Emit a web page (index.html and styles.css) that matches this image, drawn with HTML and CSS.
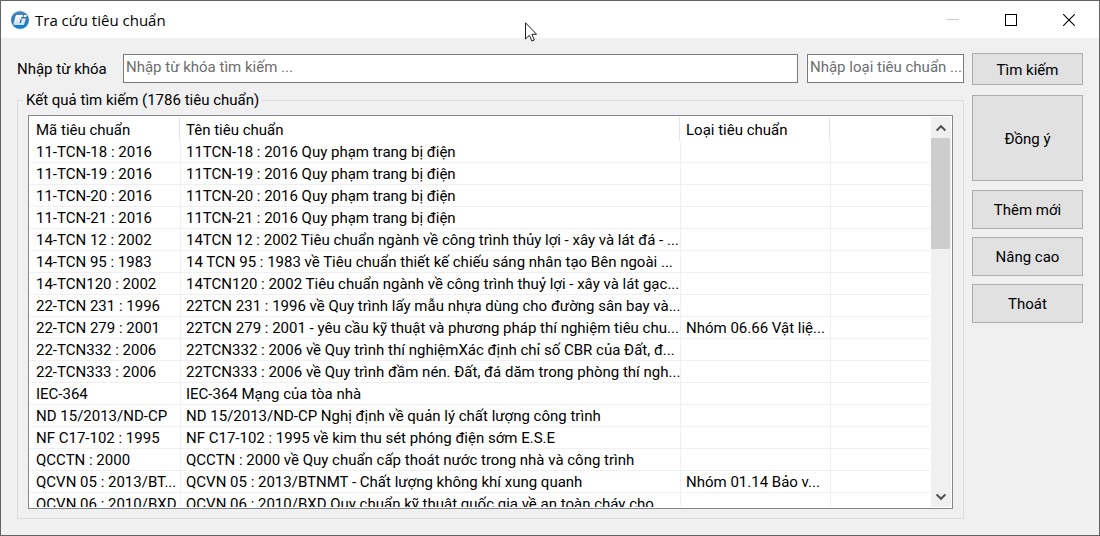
FILE: index.html
```html
<!DOCTYPE html>
<html lang="vi">
<head>
<meta charset="utf-8">
<title>Tra cứu tiêu chuẩn</title>
<link rel="stylesheet" href="styles.css">
</head>
<body>
<div class="window">
  <header class="titlebar">
    <svg class="app-icon" viewBox="0 0 20 20" aria-hidden="true">
      <defs>
        <linearGradient id="disc" x1="0" y1="0" x2="0" y2="1">
          <stop offset="0" stop-color="#4f86bd"/>
          <stop offset="0.5" stop-color="#2f76b4"/>
          <stop offset="1" stop-color="#0a83cf"/>
        </linearGradient>
        <linearGradient id="mark" x1="0" y1="0" x2="0" y2="1">
          <stop offset="0" stop-color="#ffffff"/>
          <stop offset="1" stop-color="#cfdbe8"/>
        </linearGradient>
      </defs>
      <circle cx="10" cy="10" r="9.5" fill="#c5d5e6"/>
      <circle cx="10" cy="10" r="8.8" fill="url(#disc)"/>
      <path d="M7.6 5H16.8L16.2 7H11.2L9.4 13H11L12 9.2H9.8L10.2 8.4H15.8L14 15H4.8C3.8 15 3.2 14.2 3.6 13L5.2 7.2C5.6 5.6 6.4 5 7.6 5Z" fill="url(#mark)"/>
      <path d="M13.6 5L12.8 8.4" stroke="#2f76b4" stroke-width="1"/>
    </svg>
    <h1 class="title">Tra cứu tiêu chuẩn</h1>
    <div class="caption-buttons">
      <button class="caption" type="button" aria-label="Thu nhỏ" disabled>
        <svg viewBox="0 0 12 12" aria-hidden="true"><path d="M0 5.5H12" stroke="#c8c8c8"/></svg>
      </button>
      <button class="caption" type="button" aria-label="Phóng to">
        <svg viewBox="0 0 12 12" aria-hidden="true"><rect x="0.5" y="0.5" width="11" height="11" fill="none" stroke="#000"/></svg>
      </button>
      <button class="caption" type="button" aria-label="Đóng">
        <svg viewBox="0 0 12 12" aria-hidden="true"><path d="M0.2 0.2L11.8 11.8M11.8 0.2L0.2 11.8" stroke="#000" stroke-width="1.1"/></svg>
      </button>
    </div>
  </header>

  <main class="client">
    <div class="main-column">
      <div class="search-row">
        <label class="search-label" for="keyword">Nhập từ khóa</label>
        <input class="field keyword" id="keyword" type="text" placeholder="Nhập từ khóa tìm kiếm ...">
        <input class="field kind" type="text" aria-label="Loại tiêu chuẩn" placeholder="Nhập loại tiêu chuẩn ...">
      </div>
      <fieldset class="results">
        <legend>Kết quả tìm kiếm (1786 tiêu chuẩn)</legend>
        <div class="list">
          <div class="viewport">
            <table class="grid">
              <colgroup><col class="col-code"><col class="col-name"><col class="col-kind"><col></colgroup>
              <thead>
                <tr><th>Mã tiêu chuẩn</th><th>Tên tiêu chuẩn</th><th>Loại tiêu chuẩn</th><th></th></tr>
              </thead>
              <tbody>
                <tr><td>11-TCN-18 : 2016</td><td>11TCN-18 : 2016 Quy phạm trang bị điện</td><td></td><td></td></tr>
                <tr><td>11-TCN-19 : 2016</td><td>11TCN-19 : 2016 Quy phạm trang bị điện</td><td></td><td></td></tr>
                <tr><td>11-TCN-20 : 2016</td><td>11TCN-20 : 2016 Quy phạm trang bị điện</td><td></td><td></td></tr>
                <tr><td>11-TCN-21 : 2016</td><td>11TCN-21 : 2016 Quy phạm trang bị điện</td><td></td><td></td></tr>
                <tr><td>14-TCN 12 : 2002</td><td>14TCN 12 : 2002 Tiêu chuẩn ngành về công trình thủy lợi - xây và lát đá - ...</td><td></td><td></td></tr>
                <tr><td>14-TCN 95 : 1983</td><td>14 TCN 95 : 1983 về Tiêu chuẩn thiết kế chiếu sáng nhân tạo Bên ngoài ...</td><td></td><td></td></tr>
                <tr><td>14-TCN120 : 2002</td><td>14TCN120 : 2002 Tiêu chuẩn ngành về công trình thuỷ lợi - xây và lát gạc...</td><td></td><td></td></tr>
                <tr><td>22-TCN 231 : 1996</td><td>22TCN 231 : 1996 về Quy trình lấy mẫu nhựa dùng cho đường sân bay và...</td><td></td><td></td></tr>
                <tr><td>22-TCN 279 : 2001</td><td>22TCN 279 : 2001 - yêu cầu kỹ thuật và phương pháp thí nghiệm tiêu chu...</td><td>Nhóm 06.66 Vật liệ...</td><td></td></tr>
                <tr><td>22-TCN332 : 2006</td><td>22TCN332 : 2006 về Quy trình thí nghiệmXác định chỉ số CBR của Đất, đ...</td><td></td><td></td></tr>
                <tr><td>22-TCN333 : 2006</td><td>22TCN333 : 2006 về Quy trình đầm nén. Đất, đá dăm trong phòng thí ngh...</td><td></td><td></td></tr>
                <tr><td>IEC-364</td><td>IEC-364 Mạng của tòa nhà</td><td></td><td></td></tr>
                <tr><td>ND 15/2013/ND-CP</td><td>ND 15/2013/ND-CP Nghị định về quản lý chất lượng công trình</td><td></td><td></td></tr>
                <tr><td>NF C17-102 : 1995</td><td>NF C17-102 : 1995 về kim thu sét phóng điện sớm E.S.E</td><td></td><td></td></tr>
                <tr><td>QCCTN : 2000</td><td>QCCTN : 2000 về Quy chuẩn cấp thoát nước trong nhà và công trình</td><td></td><td></td></tr>
                <tr><td>QCVN 05 : 2013/BT...</td><td>QCVN 05 : 2013/BTNMT - Chất lượng không khí xung quanh</td><td>Nhóm 01.14 Bảo v...</td><td></td></tr>
                <tr><td>QCVN 06 : 2010/BXD</td><td>QCVN 06 : 2010/BXD Quy chuẩn kỹ thuật quốc gia về an toàn cháy cho</td><td></td><td></td></tr>
              </tbody>
            </table>
          </div>
          <div class="scrollbar">
            <button class="arrow" type="button" aria-label="Cuộn lên">
              <svg viewBox="0 0 10 8" aria-hidden="true"><path d="M0.6 6.6L5 2.2L9.4 6.6" fill="none" stroke="#505050" stroke-width="2"/></svg>
            </button>
            <div class="track"><div class="thumb"></div></div>
            <button class="arrow" type="button" aria-label="Cuộn xuống">
              <svg viewBox="0 0 10 8" aria-hidden="true"><path d="M0.6 1.4L5 5.8L9.4 1.4" fill="none" stroke="#505050" stroke-width="2"/></svg>
            </button>
          </div>
        </div>
      </fieldset>
    </div>

    <div class="actions">
      <button class="action search" type="button">Tìm kiếm</button>
      <button class="action accept" type="button">Đồng ý</button>
      <button class="action" type="button">Thêm mới</button>
      <button class="action" type="button">Nâng cao</button>
      <button class="action" type="button">Thoát</button>
    </div>
  </main>

  <svg class="pointer" viewBox="0 0 12 20" aria-hidden="true">
    <path d="M0.5 0.8V17L4.3 13.4L6.9 19L9.3 18L6.9 12.3H11.6Z" fill="#fff" stroke="#1c1c28"/>
  </svg>
</div>
</body>
</html>
```
FILE: styles.css
```css
* {
  box-sizing: border-box;
}

body {
  margin: 0;
  font-family: Roboto, "Liberation Sans", Arial, sans-serif;
  font-size: 15px;
  line-height: 20px;
  color: #000;
}

button,
input {
  font: inherit;
  color: inherit;
}

.window {
  position: relative;
  display: flex;
  flex-direction: column;
  height: 100vh;
  border: 1px solid #636363;
  background: #f0f0f0;
}

.titlebar {
  display: flex;
  flex: none;
  align-items: center;
  height: 37px;
  padding: 0 1px 0 9px;
  background: #fff;
}

.app-icon {
  width: 20px;
  height: 20px;
}

.title {
  flex: 1;
  margin: 0 0 0 5px;
  font-family: "Open Sans", "Noto Sans", sans-serif;
  font-size: 15px;
  font-weight: 400;
}

.caption-buttons {
  display: flex;
  align-self: stretch;
}

.caption {
  display: grid;
  place-items: center;
  width: 58px;
  padding: 0;
  border: 0;
  background: none;
}

.caption svg {
  width: 12px;
  height: 12px;
}

.client {
  display: flex;
  flex: 1;
  gap: 8px;
  min-height: 0;
  padding: 15px 16px 16px;
}

.main-column {
  display: flex;
  flex: 1;
  flex-direction: column;
  min-width: 0;
}

.search-row {
  display: flex;
  align-items: center;
  height: 31px;
}

.search-label {
  width: 106px;
}

.field {
  height: 29px;
  padding: 0 2px 3px;
  border: 1px solid #7a7a7a;
  border-radius: 0;
  background: #fff;
}

.field::placeholder {
  color: #6d6d6d;
  opacity: 1;
}

.keyword {
  flex: 1;
  min-width: 0;
}

.kind {
  width: 157px;
  margin-left: 9px;
}

.results {
  display: flex;
  flex: 1;
  min-width: 0;
  min-height: 0;
  margin: 6px 0 0;
  padding: 5px 10px 9px;
  border: 1px solid #dcdcdc;
}

.results legend {
  margin-left: -5px;
  padding: 0 3px;
}

.list {
  display: flex;
  flex: 1;
  min-width: 0;
  min-height: 0;
  padding: 1px;
  border: 1px solid #828790;
  background: #fff;
}

.viewport {
  flex: 1;
  min-width: 0;
  overflow: hidden;
}

.grid {
  width: 100%;
  table-layout: fixed;
  border-collapse: separate;
  border-spacing: 0;
}

.col-code,
.col-kind {
  width: 150px;
}

.col-name {
  width: 500px;
}

.grid th,
.grid td {
  overflow: hidden;
  white-space: nowrap;
  text-align: left;
  font-weight: 400;
}

.grid th {
  height: 24px;
  padding: 3px 0 1px 6px;
  border-right: 1px solid #e5e5e5;
}

.grid th:last-child {
  border-right: 0;
}

.grid td {
  height: 22px;
  padding: 2px 0 0 5px;
  border-bottom: 1px solid #f0f0f0;
  border-left: 1px solid #f0f0f0;
  line-height: 19px;
}

.grid td:first-child {
  padding-left: 6px;
  border-left: 0;
}

.scrollbar {
  display: flex;
  flex: none;
  flex-direction: column;
  width: 20px;
  margin-left: 1px;
  background: #f0f0f0;
}

.arrow {
  display: grid;
  place-items: center;
  height: 21px;
  padding: 0;
  border: 0;
  background: none;
}

.arrow svg {
  width: 10px;
  height: 8px;
}

.track {
  flex: 1;
}

.thumb {
  width: 19px;
  height: 32%;
  background: #cdcdcd;
}

.actions {
  display: flex;
  flex: none;
  flex-direction: column;
  gap: 8px;
  width: 111px;
}

.action {
  height: 39px;
  padding: 1px 0 0;
  border: 1px solid #adadad;
  border-radius: 0;
  background: #e1e1e1;
}

.search {
  height: 32px;
  margin-bottom: 2px;
}

.accept {
  height: 86px;
  margin-bottom: 1px;
}

.pointer {
  position: absolute;
  top: 21px;
  left: 524px;
  width: 12px;
  height: 20px;
}
```
